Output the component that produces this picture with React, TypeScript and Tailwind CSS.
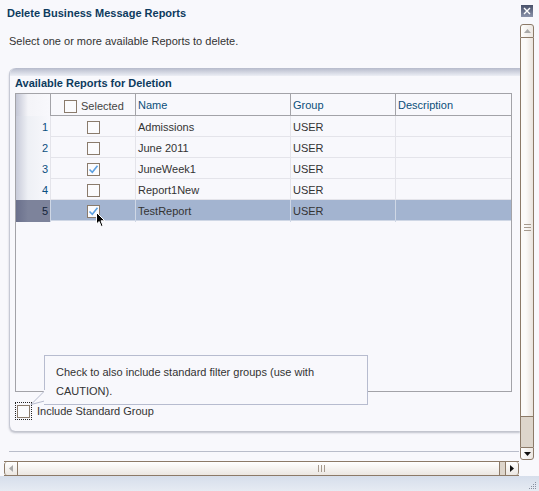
import React from 'react';

interface Report {
  id: number;
  name: string;
  group: string;
  description: string;
  checked: boolean;
}

const reports: Report[] = [
  { id: 1, name: 'Admissions', group: 'USER', description: '', checked: false },
  { id: 2, name: 'June 2011', group: 'USER', description: '', checked: false },
  { id: 3, name: 'JuneWeek1', group: 'USER', description: '', checked: true },
  { id: 4, name: 'Report1New', group: 'USER', description: '', checked: false },
  { id: 5, name: 'TestReport', group: 'USER', description: '', checked: true },
];

const SELECTED_ROW = 5;

/** small square checkbox */
function Check({ checked }: { checked: boolean }) {
  return (
    <span className="w-[13px] h-[13px] border border-[#8a7b6c] bg-[#fbfbfd] flex items-center justify-center">
      {checked && (
        <svg width="11" height="11" viewBox="0 0 11 11">
          <path d="M1.5 5.5 L4.3 8.3 L9.5 1.8" fill="none" stroke="#5b9fe0" strokeWidth="1.6" />
        </svg>
      )}
    </span>
  );
}

/** vertical scrollbar on the right */
function VScroll() {
  return (
    <div className="w-[14px] h-[436px] flex flex-col">
      <div className="h-[14px] border border-[#8c7a68] rounded-t-[3px] bg-[linear-gradient(to_right,#ffffff,#ece7e2)] flex items-center justify-center">
        <svg width="7" height="4" viewBox="0 0 7 4">
          <path d="M0 4 L3.5 0 L7 4 Z" fill="#a9a9a9" />
        </svg>
      </div>
      <div className="flex-1 border-x border-[#8c7a68] bg-[linear-gradient(to_right,#fbfaf9_0%,#fbfaf9_40%,#e9e3dd_100%)] flex flex-col items-center justify-center gap-[2px]">
        <span className="w-[7px] h-px bg-[#a69a8e]" />
        <span className="w-[7px] h-px bg-[#a69a8e]" />
        <span className="w-[7px] h-px bg-[#a69a8e]" />
      </div>
      <div className="h-[31px] border-x border-t border-[#8c7a68] bg-[#ddd5cb]" />
      <div className="h-[13px] border border-[#8c7a68] rounded-b-[3px] bg-[linear-gradient(to_right,#ffffff,#ece7e2)] flex items-center justify-center">
        <svg width="7" height="4" viewBox="0 0 7 4">
          <path d="M0 0 L7 0 L3.5 4 Z" fill="#111" />
        </svg>
      </div>
    </div>
  );
}

/** horizontal scrollbar at the bottom */
function HScroll() {
  return (
    <div className="ml-[4px] w-[515px] h-[15px] flex border-y border-[#8c7a68] bg-[linear-gradient(to_bottom,#ffffff,#ece7e2)]">
      <div className="w-[14px] border-x border-[#8c7a68] rounded-l-[3px] flex items-center justify-center">
        <svg width="4" height="7" viewBox="0 0 4 7">
          <path d="M4 0 L0 3.5 L4 7 Z" fill="#a9a9a9" />
        </svg>
      </div>
      <div className="flex-1 flex items-center pl-[300px] gap-[2px]">
        <span className="w-px h-[7px] bg-[#a69a8e]" />
        <span className="w-px h-[7px] bg-[#a69a8e]" />
        <span className="w-px h-[7px] bg-[#a69a8e]" />
      </div>
      <div className="w-[6px] border-l border-[#8c7a68] bg-[#ddd5cb]" />
      <div className="w-[14px] border-x border-[#8c7a68] rounded-r-[3px] flex items-center justify-center">
        <svg width="4" height="7" viewBox="0 0 4 7">
          <path d="M0 0 L4 3.5 L0 7 Z" fill="#111" />
        </svg>
      </div>
    </div>
  );
}

const cols = 'grid grid-cols-[35px_85px_155px_105px_116px]';

export default function App() {
  return (
    <div className="relative w-[539px] h-[491px] overflow-hidden bg-[#f8f8fc] flex flex-col text-[11px] text-[#333] font-['Liberation_Sans',Arial,sans-serif]">
      {/* タイトル */}
      <div className="h-[24px] flex items-start justify-between">
        <h1 className="pl-[7px] pt-[7px] leading-[13px] font-bold text-[#0d3b5e]">Delete Business Message Reports</h1>
        <button className="mt-[5px] mr-[6px] w-[12px] h-[12px] bg-[linear-gradient(to_bottom,#48506a,#8a92aa)] flex items-center justify-center">
          <svg width="8" height="8" viewBox="0 0 8 8">
            <path d="M1 1 L7 7 M7 1 L1 7" stroke="#fff" strokeWidth="1.4" />
          </svg>
        </button>
      </div>

      <div className="h-[437px] flex">
        <div className="w-[520px] flex flex-col">
          <p className="mt-[11px] pl-[9px] leading-[12px]">Select one or more available Reports to delete.</p>

          {/* パネル */}
          <div className="mt-[21px] ml-[9px] w-[511px] h-[363px] rounded-l-[6px] border-l border-[#c6c9d5] shadow-[0_2px_2px_rgba(90,95,115,0.35)] bg-[#f8f8fc] flex flex-col">
            <div className="h-[8px] rounded-tl-[6px] bg-[linear-gradient(to_bottom,#b6bacb,#eceef5)]" />
            <div className="h-[17px] pt-[1px] pl-[5px] leading-[12px] font-bold text-[#0d3b5e]">Available Reports for Deletion</div>

            {/* テーブル */}
            <div className="ml-[5px] w-[497px] h-[299px] border border-[#a3a3a8] flex flex-col">
              <div className={`${cols} h-[22px] border-b border-[#a3a3a8] leading-[23px]`}>
                <div className="border-r border-[#a3a3a8] bg-[linear-gradient(to_right,#c3c6d5_0px,#f4f4f8_12px,#f8f8fc_100%)]" />
                <div className="border-r border-[#a3a3a8] flex items-center pl-[13px] pt-[1px] gap-[4px] text-[#444]">
                  <Check checked={false} />
                  <span>Selected</span>
                </div>
                <div className="border-r border-[#a3a3a8] pl-[2px] text-[#0b4f7a]">Name</div>
                <div className="border-r border-[#a3a3a8] pl-[2px] text-[#0b4f7a]">Group</div>
                <div className="pl-[2px] text-[#0b4f7a]">Description</div>
              </div>

              {reports.map((r) => {
                const sel = r.id === SELECTED_ROW;
                const line = sel ? 'border-[#cfd7e5]' : 'border-[#e4e4ea]';
                return (
                  <div
                    key={r.id}
                    className={`${cols} h-[21px] border-b leading-[22px] ${line} ${sel ? 'bg-[#a3b4d0]' : ''}`}
                  >
                    <div
                      className={`border-r ${line} text-right pr-[2px] ${
                        sel
                          ? 'bg-[linear-gradient(to_right,#6a708c_0px,#7d839b_12px)] text-[#14233a]'
                          : 'bg-[linear-gradient(to_right,#c8cbd9_0px,#eef0f5_12px,#f8f8fc_100%)] text-[#0b4f80]'
                      }`}
                    >
                      {r.id}
                    </div>
                    <div className={`border-r ${line} flex items-center justify-center pt-[1px]`}>
                      <Check checked={r.checked} />
                    </div>
                    <div className={`border-r ${line} pl-[2px]`}>{r.name}</div>
                    <div className={`border-r ${line} pl-[2px]`}>{r.group}</div>
                    <div className="pl-[2px]">{r.description}</div>
                  </div>
                );
              })}
            </div>

            {/* Include Standard Group */}
            <div className="mt-[10px] ml-[5px] flex items-center">
              <span className="w-[17px] h-[18px] border border-dotted border-[#222] flex items-center justify-center">
                <Check checked={false} />
              </span>
              <span className="ml-[5px] leading-[13px]">Include Standard Group</span>
            </div>
          </div>

          <div className="mt-[20px] ml-[9px] w-[510px] h-px bg-[#b9bdca]" />
        </div>
        <VScroll />
      </div>

      <HScroll />

      {/* ステータスバー */}
      <div className="h-[15px] bg-[linear-gradient(to_bottom,#d6deeb,#e6ebf3)] flex justify-end items-end">
        <svg width="10" height="10" viewBox="0 0 10 10" className="mr-[2px] mb-[1px]">
          {[
            [8, 2], [8, 4], [6, 4], [8, 6], [6, 6], [4, 6], [8, 8], [6, 8], [4, 8], [2, 8],
          ].map(([x, y]) => (
            <rect key={`${x}-${y}`} x={x} y={y} width="1" height="1" fill="#8890a0" />
          ))}
        </svg>
      </div>

      {/* ツールチップ */}
      <div className="absolute left-[44px] top-[355px] w-[324px] h-[50px] border border-[#b7bccf] bg-[#f8f8fc] pl-[11px] pt-[7px] leading-[19px]">
        <p>Check to also include standard filter groups (use with</p>
        <p>CAUTION).</p>
      </div>
      <svg className="absolute left-[30px] top-[390px]" width="16" height="16" viewBox="0 0 16 16">
        <path d="M14.5 1 L1 14.5 L14.5 11" fill="#f8f8fc" stroke="#b7bccf" strokeWidth="1" />
        <rect x="14" y="0" width="2" height="14" fill="#f8f8fc" />
      </svg>

      {/* マウスカーソル */}
      <svg className="absolute left-[96px] top-[212px]" width="10" height="16" viewBox="0 0 10 16">
        <path d="M0.5 0.5 L0.5 12 L3.2 9.5 L5.2 14.5 L7 13.7 L5 8.8 L8.8 8.8 Z" fill="#000" stroke="#fff" strokeWidth="1" />
      </svg>
    </div>
  );
}
